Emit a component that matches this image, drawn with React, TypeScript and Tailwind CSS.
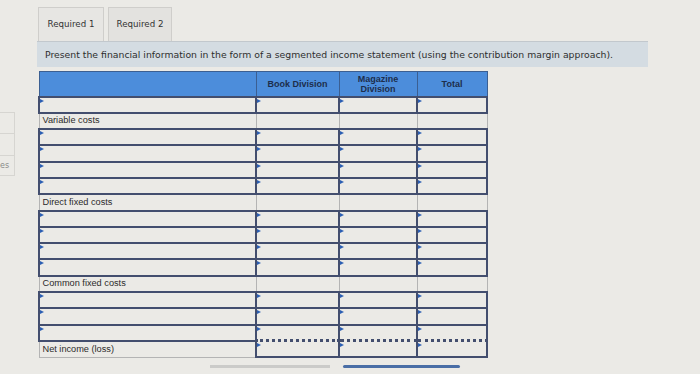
import React from "react"

type Row =
  | { kind: "input" }
  | { kind: "label"; text: string }
  | { kind: "total"; text: string }

const rows: Row[] = [
  { kind: "input" },
  { kind: "label", text: "Variable costs" },
  { kind: "input" },
  { kind: "input" },
  { kind: "input" },
  { kind: "input" },
  { kind: "label", text: "Direct fixed costs" },
  { kind: "input" },
  { kind: "input" },
  { kind: "input" },
  { kind: "input" },
  { kind: "label", text: "Common fixed costs" },
  { kind: "input" },
  { kind: "input" },
  { kind: "input" },
  { kind: "total", text: "Net income (loss)" },
]

// little blue marker in the corner of every entry cell
function Marker() {
  return (
    <span className="absolute left-0 top-[1px] h-0 w-0 border-y-[2px] border-l-[4px] border-y-transparent border-l-[#2c5fb3]" />
  )
}

function InputCell({ dotted }: { dotted?: boolean }) {
  return (
    <td
      className={
        dotted
          ? "h-[16.3px] border-2 border-t-[3px] border-[#434e6e] p-0"
          : "h-[16.3px] border-2 border-[#434e6e] p-0"
      }
      style={dotted ? { borderStyle: "dotted solid solid solid" } : undefined}
    >
      <div className="relative h-full w-full">
        <Marker />
      </div>
    </td>
  )
}

function LabelCell({ text }: { text: string }) {
  return (
    <td className="h-[16.3px] border border-[#b4b4b4] p-0 pl-[3px] align-middle text-[9.2px] leading-none text-[#2b2b2b]">
      {text}
    </td>
  )
}

function BlankCell() {
  return <td className="h-[16.3px] border border-[#b4b4b4] p-0" />
}

export default function App() {
  return (
    <div className="flex h-[374px] w-[700px] overflow-hidden bg-[#ebeae6] font-['DejaVu_Sans',sans-serif]">
      {/* cut-off side panel */}
      <div className="mt-[112px] flex h-[64px] w-[15px] flex-col border-r border-[#d6d5d1]">
        <div className="h-[22px] border-y border-[#d6d5d1]" />
        <div className="h-[22px] border-b border-[#d6d5d1]" />
        <div className="flex flex-1 items-center border-b border-[#d6d5d1] text-[8px] text-[#8a8a8a]">
          es
        </div>
      </div>

      <div className="ml-[22px] flex flex-col pt-[7px]">
        <div className="flex gap-[4px] pl-[1px]">
          <div className="flex h-[34px] w-[66px] items-center justify-center border border-b-0 border-[#cfcecb] bg-[#e7e6e3] text-[8.7px] text-[#333]">
            Required 1
          </div>
          <div className="flex h-[34px] w-[64px] items-center justify-center border border-b-0 border-[#cfcecb] bg-[#e3e2df] text-[8.7px] text-[#333]">
            Required 2
          </div>
        </div>

        <div className="flex h-[26px] w-[611px] items-center border-t border-[#c2c8cd] bg-[#d4dce2] pl-[8px] text-[9.3px] text-[#2e2e2e]">
          Present the financial information in the form of a segmented income statement (using the contribution margin approach).
        </div>

        <table className="ml-[1px] mt-[4px] w-[448px] table-fixed border-collapse font-['Liberation_Sans',sans-serif]">
          <colgroup>
            <col className="w-[217px]" />
            <col className="w-[83px]" />
            <col className="w-[78px]" />
            <col className="w-[70px]" />
          </colgroup>
          <thead>
            <tr className="h-[25px] bg-[#4c8ddb]">
              <th className="border border-[#3b5f92] p-0" />
              <th className="border border-[#3b5f92] p-0 text-center text-[9px] font-bold leading-[10px] text-[#1d2e4c]">
                Book Division
              </th>
              <th className="border border-[#3b5f92] p-0 text-center text-[9px] font-bold leading-[10px] text-[#1d2e4c]">
                Magazine
                <br />
                Division
              </th>
              <th className="border border-[#3b5f92] p-0 text-center text-[9px] font-bold leading-[10px] text-[#1d2e4c]">
                Total
              </th>
            </tr>
          </thead>
          <tbody>
            {rows.map((row, i) => {
              if (row.kind === "input") {
                return (
                  <tr key={i}>
                    <InputCell />
                    <InputCell />
                    <InputCell />
                    <InputCell />
                  </tr>
                )
              }
              if (row.kind === "label") {
                return (
                  <tr key={i}>
                    <LabelCell text={row.text} />
                    <BlankCell />
                    <BlankCell />
                    <BlankCell />
                  </tr>
                )
              }
              return (
                <tr key={i}>
                  <LabelCell text={row.text} />
                  <InputCell dotted />
                  <InputCell dotted />
                  <InputCell dotted />
                </tr>
              )
            })}
          </tbody>
        </table>

        {/* scroll / page indicator bars */}
        <div className="mt-[7px] flex gap-[13px] pl-[173px]">
          <div className="h-[3px] w-[120px] bg-[#cbcbc9]" />
          <div className="h-[3px] w-[117px] rounded-full bg-[#4a6ea6]" />
        </div>
      </div>
    </div>
  )
}
